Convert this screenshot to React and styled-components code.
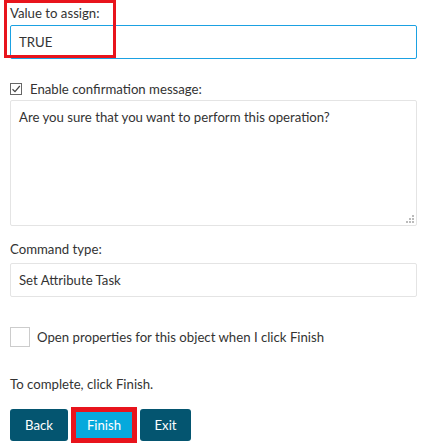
import React from 'react';
import styled, { createGlobalStyle } from 'styled-components';

const GlobalStyle = createGlobalStyle`
  body {
    margin: 0;
    background: #fff;
    font-family: Lato, "Open Sans", sans-serif;
    font-size: 13.2px;
    color: #333;
  }
`;

const Page = styled.div`
  width: 426px;
  height: 448px;
  padding: 0 9px 0 10px;
  box-sizing: border-box;
  display: flex;
  flex-direction: column;
`;

const Marked = styled.div`
  position: absolute;
  left: 4px;
  top: 0;
  width: 112px;
  height: 58px;
  border: 3px solid #e8141c;
  box-sizing: border-box;
  pointer-events: none;
`;

const Section = styled.div`
  position: relative;
  display: flex;
  flex-direction: column;
  margin-top: ${p => p.top || 0}px;
`;

const Label = styled.div`
  height: 20px;
  line-height: 20px;
  margin-bottom: ${p => p.gap || 0}px;
`;

const Field = styled.div`
  height: 34px;
  box-sizing: border-box;
  border: 1px solid ${p => (p.focused ? '#1ba1e2' : '#e4e4e4')};
  border-radius: 2px;
  padding: 0 8px;
  display: flex;
  align-items: center;
`;

const TextArea = styled.div`
  position: relative;
  height: 126px;
  margin-top: 1px;
  box-sizing: border-box;
  border: 1px solid #e4e4e4;
  border-radius: 2px;
  padding: 7px 8px;
  line-height: 18px;
`;

const Grip = styled.svg`
  position: absolute;
  right: 2px;
  bottom: 2px;
`;

const CheckRow = styled.label`
  display: flex;
  align-items: center;
  gap: ${p => p.gap}px;
  height: 20px;
`;

const Box = styled.span`
  width: ${p => p.size}px;
  height: ${p => p.size}px;
  box-sizing: border-box;
  border: 1px solid ${p => (p.checked ? '#666' : '#ccc')};
  display: flex;
  align-items: center;
  justify-content: center;
  flex: none;
`;

const Buttons = styled.div`
  display: flex;
  align-items: center;
  gap: 3px;
  margin-top: 13px;
`;

const Button = styled.button`
  font-family: inherit;
  font-size: 13.2px;
  color: #fff;
  height: ${p => (p.marked ? 36 : 32)}px;
  width: ${p => p.w}px;
  padding: 0;
  box-sizing: border-box;
  border: ${p => (p.marked ? '5px solid #e8141c' : 'none')};
  border-radius: ${p => (p.marked ? 0 : 3)}px;
  background: ${p => (p.primary ? '#06a9dc' : '#045570')};
`;

export default function App() {
  return (
    <>
      <GlobalStyle />
      <Page>
        <Section top={3}>
          <Label gap={2}>Value to assign:</Label>
          <Field focused>TRUE</Field>
        </Section>
        <Marked />

        <Section top={20}>
          <CheckRow gap={8}>
            <Box size={12} checked>
              <svg width="10" height="10" viewBox="0 0 10 10">
                <path d="M1.5 5.2 L4 7.6 L8.8 2" fill="none" stroke="#444" strokeWidth="1.2" />
              </svg>
            </Box>
            Enable confirmation message:
          </CheckRow>
          <TextArea>
            Are you sure that you want to perform this operation?
            <Grip width="8" height="8" viewBox="0 0 8 8">
              <rect x="6" y="0" width="2" height="2" fill="#bbb" />
              <rect x="3" y="3" width="2" height="2" fill="#bbb" />
              <rect x="6" y="3" width="2" height="2" fill="#bbb" />
              <rect x="0" y="6" width="2" height="2" fill="#bbb" />
              <rect x="3" y="6" width="2" height="2" fill="#bbb" />
              <rect x="6" y="6" width="2" height="2" fill="#bbb" />
            </Grip>
          </TextArea>
        </Section>

        <Section top={13}>
          <Label gap={4}>Command type:</Label>
          <Field>Set Attribute Task</Field>
        </Section>

        <Section top={30}>
          <CheckRow gap={7}>
            <Box size={20} />
            Open properties for this object when I click Finish
          </CheckRow>
        </Section>

        <Section top={27}>
          <Label>To complete, click Finish.</Label>
        </Section>

        <Buttons>
          <Button w={58}>Back</Button>
          <Button w={66} primary marked>Finish</Button>
          <Button w={51}>Exit</Button>
        </Buttons>
      </Page>
    </>
  );
}
